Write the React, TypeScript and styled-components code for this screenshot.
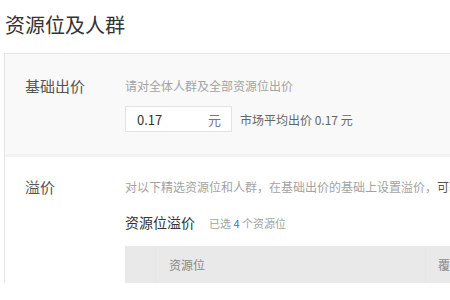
import styled, { createGlobalStyle } from "styled-components";

const GlobalStyle = createGlobalStyle`
  html, body {
    margin: 0;
    padding: 0;
    background: #fff;
    overflow: hidden;
  }
  body {
    font-family: "Noto Sans CJK SC", "Liberation Sans", sans-serif;
    color: #333;
  }
`;

const Page = styled.div`
  width: 640px;
  padding-left: 4px;
`;

const Title = styled.h2`
  margin: 0;
  height: 53px;
  padding-left: 1px;
  font-size: 20px;
  font-weight: 400;
  line-height: 50px;
  color: #333;
`;

const Card = styled.div`
  border-top: 1px solid #e6e6e6;
  border-left: 1px solid #e6e6e6;
`;

const Section = styled.div<{ $shaded?: boolean }>`
  display: flex;
  padding: ${(p) => (p.$shaded ? "22px 0 22px" : "20px 0 0")};
  background: ${(p) => (p.$shaded ? "#f9f9f9" : "#fff")};
  border-bottom: ${(p) => (p.$shaded ? "3px solid #f3f3f3" : "none")};
`;

const Label = styled.div`
  width: 100px;
  padding-left: 20px;
  flex-shrink: 0;
  font-size: 15px;
  line-height: 20px;
  color: #555;
`;

const Body = styled.div`
  display: flex;
  flex-direction: column;
  flex: 1;
`;

const Hint = styled.div`
  font-size: 12px;
  line-height: 18px;
  color: #a3a3a3;
  white-space: nowrap;
  padding-top: 1px;
`;

const Strong = styled.span`
  color: #555;
`;

const PriceRow = styled.div`
  display: flex;
  align-items: center;
  margin-top: 11px;
`;

const PriceInput = styled.div`
  display: flex;
  align-items: center;
  justify-content: space-between;
  box-sizing: border-box;
  width: 107px;
  height: 26px;
  padding: 0 10px 0 11px;
  background: #fff;
  border: 1px solid #e3e3e3;
  font-size: 13px;
  color: #333;
`;

const Unit = styled.span`
  color: #777;
  font-size: 13px;
`;

const Market = styled.span`
  margin-left: 8px;
  font-size: 12px;
  color: #666;
`;

const SubRow = styled.div`
  display: flex;
  align-items: baseline;
  margin-top: 16px;
`;

const SubTitle = styled.span`
  font-size: 14px;
  line-height: 20px;
  color: #333;
`;

const Picked = styled.span`
  margin-left: 14px;
  font-size: 11px;
  color: #a3a3a3;
`;

const Count = styled.b`
  font-weight: 400;
  color: #3f6fc0;
`;

const TableHead = styled.div`
  display: grid;
  grid-template-columns: 30px 270px 1fr;
  height: 37px;
  margin-top: 14px;
  background: #e9e9e9;
  font-size: 12px;
  color: #888;
`;

const HeadCell = styled.div<{ $pad?: number }>`
  display: flex;
  align-items: center;
  padding-left: ${(p) => p.$pad ?? 0}px;
  border-left: 1px solid #e6e6e6;
  &:first-child {
    border-left: none;
  }
`;

export default function App() {
  return (
    <Page>
      <GlobalStyle />
      <Title>资源位及人群</Title>
      <Card>
        <Section $shaded>
          <Label>基础出价</Label>
          <Body>
            <Hint>请对全体人群及全部资源位出价</Hint>
            <PriceRow>
              <PriceInput>
                <span>0.17</span>
                <Unit>元</Unit>
              </PriceInput>
              <Market>市场平均出价 0.17 元</Market>
            </PriceRow>
          </Body>
        </Section>
        <Section>
          <Label>溢价</Label>
          <Body>
            <Hint>
              对以下精选资源位和人群，在基础出价的基础上设置溢价，
              <Strong>可获得更多优质流量</Strong>
            </Hint>
            <SubRow>
              <SubTitle>资源位溢价</SubTitle>
              <Picked>
                已选 <Count>4</Count> 个资源位
              </Picked>
            </SubRow>
            <TableHead>
              <HeadCell />
              <HeadCell $pad={13}>资源位</HeadCell>
              <HeadCell $pad={12}>覆盖人数</HeadCell>
            </TableHead>
          </Body>
        </Section>
      </Card>
    </Page>
  );
}
